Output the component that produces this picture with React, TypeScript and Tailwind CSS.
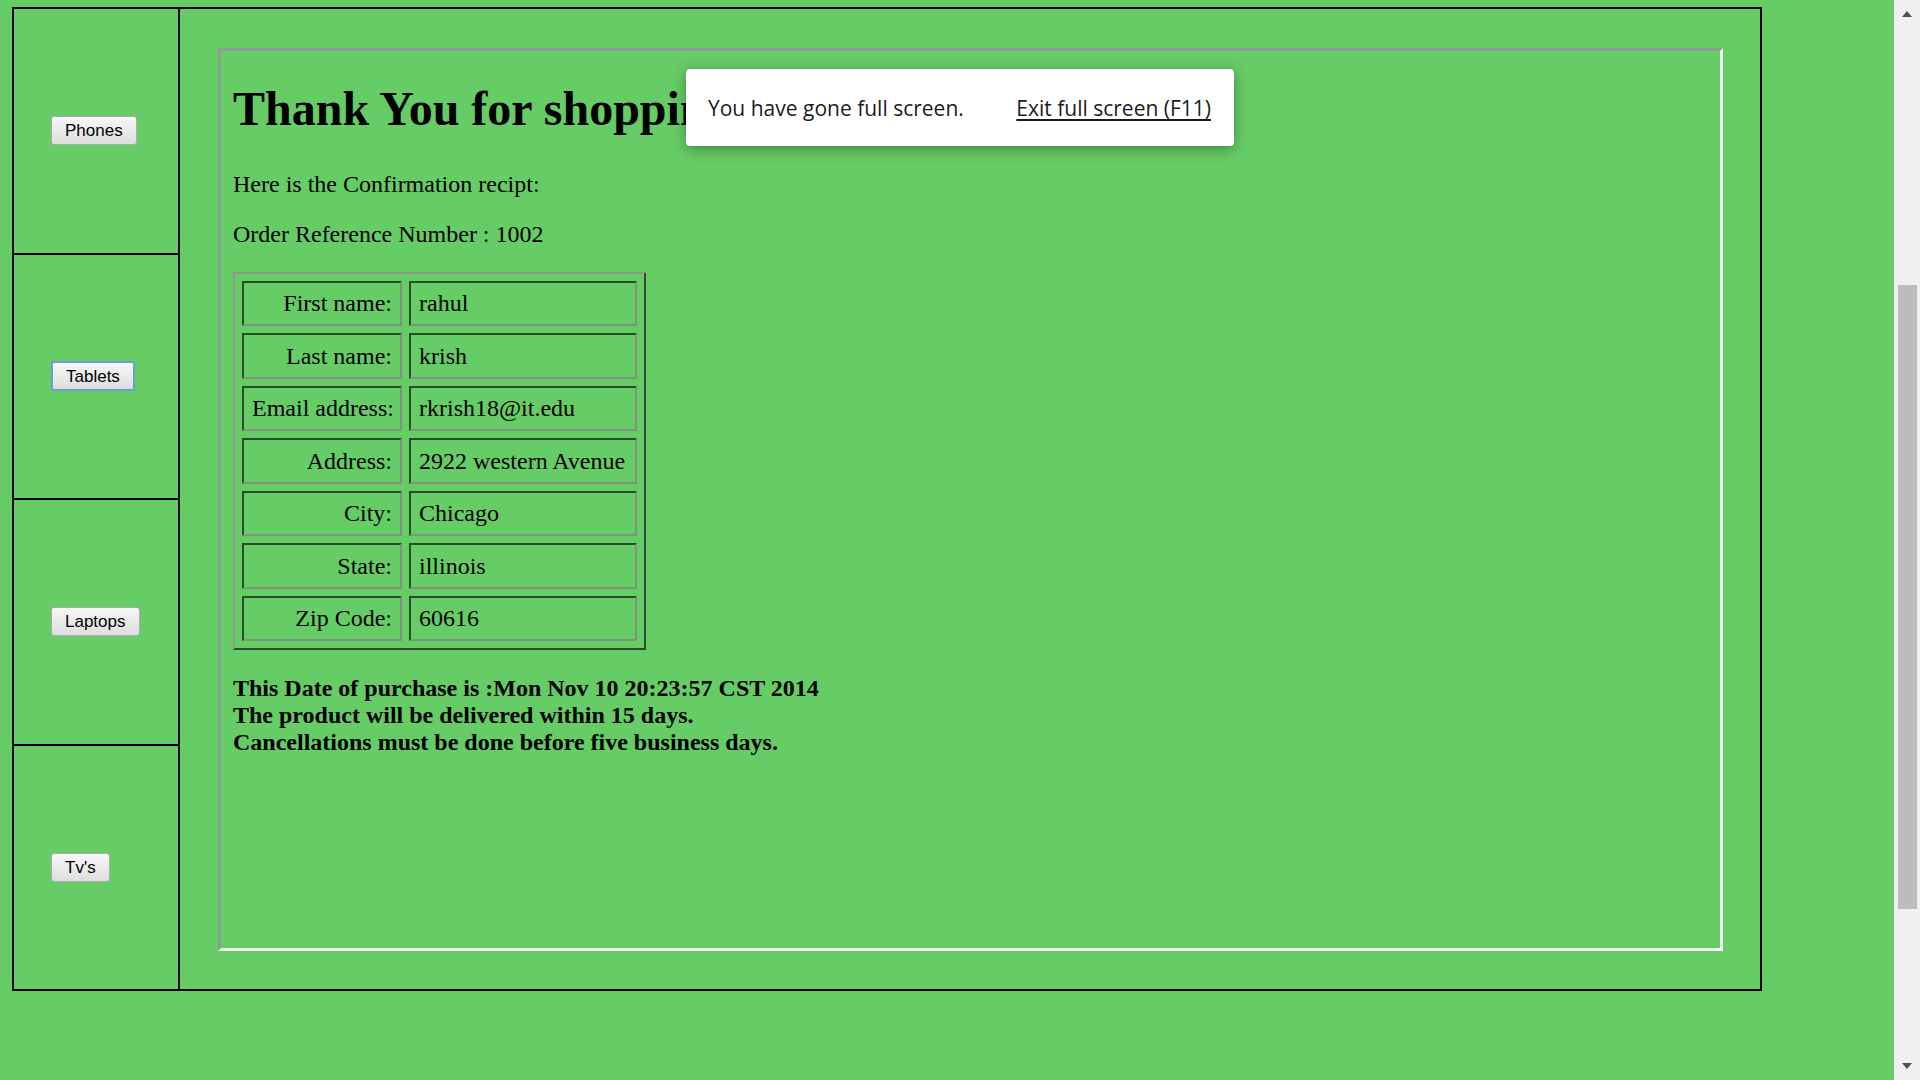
const sideItems = ["Phones", "Tablets", "Laptops", "Tv's"];

const details: [string, string][] = [
  ["First name:", "rahul"],
  ["Last name:", "krish"],
  ["Email address:", "rkrish18@it.edu"],
  ["Address:", "2922 western Avenue"],
  ["City:", "Chicago"],
  ["State:", "illinois"],
  ["Zip Code:", "60616"],
];

function NavButton({ label, focused }: { label: string; focused?: boolean }) {
  return (
    <button
      className={
        focused
          ? "h-[30px] px-[13px] rounded-[3px] border-2 border-[#6b9bd8] bg-linear-to-b from-[#f7f7f7] to-[#dedede] text-[17px] text-black font-['Liberation_Sans',Arial,sans-serif]"
          : "h-[29px] px-[13px] rounded-[3px] border border-[#acacac] bg-linear-to-b from-[#f7f7f7] to-[#dedede] text-[17px] text-black font-['Liberation_Sans',Arial,sans-serif]"
      }
    >
      {label}
    </button>
  );
}

const cellBase =
  "px-[8px] whitespace-nowrap border-2 border-t-[#2c4a2c] border-l-[#2c4a2c] border-b-[#7f917f] border-r-[#7f917f]";

export default function App() {
  return (
    <div className="relative flex h-screen overflow-hidden bg-[#66cc66] font-['Liberation_Serif','Times_New_Roman',serif] text-black">
      <div className="flex-1 pt-[7px] pl-[12px]">
        <div className="flex w-[1750px] h-[984px] border-2 border-black">
          {/* side menu */}
          <div className="flex w-[166px] flex-col border-r-2 border-black">
            {sideItems.map((item, i) => (
              <div
                key={item}
                className={
                  i < sideItems.length - 1
                    ? "flex flex-1 items-center border-b-2 border-black pl-[37px]"
                    : "flex flex-1 items-center pl-[37px]"
                }
              >
                <NavButton label={item} focused={item === "Tablets"} />
              </div>
            ))}
          </div>

          {/* content frame */}
          <div className="flex-1 pl-[38px] pr-[37px] pt-[39px] pb-[38px]">
            <div className="h-full border-[3px] border-t-[#8e9e8e] border-l-[#8e9e8e] border-b-[#eef6ee] border-r-[#eef6ee] px-[12px] pt-[32px]">
              <h1 className="text-[48px] leading-[52px] font-bold mb-[35px] whitespace-nowrap">
                Thank You for shopping with us!
              </h1>
              <p className="text-[24px] leading-[28px] mb-[22px]">Here is the Confirmation recipt:</p>
              <p className="text-[24px] leading-[28px] mb-[24px]">Order Reference Number : 1002</p>

              <table className="table-fixed w-[413px] border-separate border-spacing-[7px] border-2 border-t-[#8a9a8a] border-l-[#8a9a8a] border-b-[#2c4a2c] border-r-[#2c4a2c] text-[24px] leading-[27px]">
                <colgroup>
                  <col className="w-[160px]" />
                  <col className="w-[228px]" />
                </colgroup>
                <tbody>
                  {details.map(([label, value], i) => (
                    <tr key={label} className={i % 2 === 0 ? "h-[45px]" : "h-[46px]"}>
                      <td className={cellBase + " text-right"}>{label}</td>
                      <td className={cellBase + " text-left"}>{value}</td>
                    </tr>
                  ))}
                </tbody>
              </table>

              <div className="mt-[25px] text-[24px] leading-[27px] font-bold">
                <div>This Date of purchase is :Mon Nov 10 20:23:57 CST 2014</div>
                <div>The product will be delivered within 15 days.</div>
                <div>Cancellations must be done before five business days.</div>
              </div>
            </div>
          </div>
        </div>
      </div>

      {/* window scrollbar */}
      <div className="flex w-[26px] flex-col items-center bg-[#f0f0f0]">
        <div className="flex h-[28px] items-center justify-center">
          <svg width="10" height="6" viewBox="0 0 10 6">
            <path d="M5 0 L10 6 L0 6 Z" fill="#505050" />
          </svg>
        </div>
        <div className="mt-[257px] h-[624px] w-[19px] bg-[#bcbcbc]" />
        <div className="flex-1" />
        <div className="flex h-[28px] items-center justify-center">
          <svg width="10" height="6" viewBox="0 0 10 6">
            <path d="M0 0 L10 0 L5 6 Z" fill="#505050" />
          </svg>
        </div>
      </div>

      {/* full screen notice */}
      <div className="absolute left-[686px] top-[69px] flex h-[77px] w-[548px] items-center justify-between rounded-[4px] bg-white pl-[22px] pr-[23px] pt-[3px] text-[21px] text-[#1b1b1b] shadow-[0_3px_14px_rgba(0,0,0,0.35)] font-['Open_Sans','Noto_Sans',sans-serif]">
        <span>You have gone full screen.</span>
        <span className="underline underline-offset-[3px]">Exit full screen (F11)</span>
      </div>
    </div>
  );
}
